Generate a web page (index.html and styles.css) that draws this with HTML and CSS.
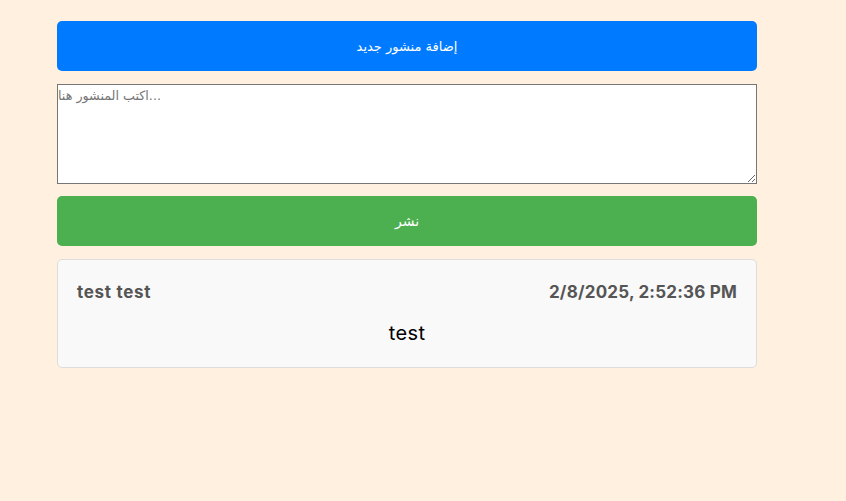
FILE: index.html
```html
<!DOCTYPE html>
<html lang="ar">
<head>
<meta charset="utf-8">
<title>المنشورات</title>
<link rel="stylesheet" href="styles.css">
</head>
<body>
<main class="container">
  <button class="btn btn-blue">إضافة منشور جديد</button>
  <textarea class="post-input" placeholder="اكتب المنشور هنا..."></textarea>
  <button class="btn btn-green">نشر</button>
  <article class="post">
    <div class="post-header">
      <span class="post-author">test test</span>
      <span class="post-date">2/8/2025, 2:52:36 PM</span>
    </div>
    <p class="post-body">test</p>
  </article>
</main>
</body>
</html>
```
FILE: styles.css
```css
html, body {
  margin: 0;
  padding: 0;
  background: #fff0df;
}
body {
  font-family: "Inter", "Noto Sans", sans-serif;
}
.container {
  width: 700px;
  margin: 21px 0 0 57px;
  display: flex;
  flex-direction: column;
  gap: 13px;
}
.btn {
  height: 50px;
  border: none;
  border-radius: 5px;
  color: #fff;
  font-family: "DejaVu Sans", sans-serif;
  font-size: 13px;
  padding: 0;
}
.btn-blue { background: #007bff; }
.btn-green { background: #4caf50; font-size: 14px; margin-top: -1px; }
.post-input {
  box-sizing: border-box;
  width: 700px;
  height: 100px;
  margin: 0;
  padding: 3px 0;
  border: 1px solid #767676;
  font-family: "DejaVu Sans", sans-serif;
  font-size: 12.7px;
  resize: vertical;
  background: #fff;
  direction: ltr;
}
.post-input::placeholder { color: #757575; }
.post {
  background: #f9f9f9;
  border: 1px solid #ddd;
  border-radius: 5px;
  padding: 20px 19px 22px;
  height: 109px;
  box-sizing: border-box;
}
.post-header {
  display: flex;
  justify-content: space-between;
  align-items: center;
  font-weight: 700;
  font-size: 17px;
  color: #555;
  line-height: 24px;
}
.post-author { letter-spacing: 0.7px; }
.post-date { letter-spacing: 0.2px; }
.post-body {
  margin: 17px 0 0;
  text-align: center;
  font-size: 20px;
  letter-spacing: 0.4px;
  line-height: 24px;
  color: #000;
}
```
